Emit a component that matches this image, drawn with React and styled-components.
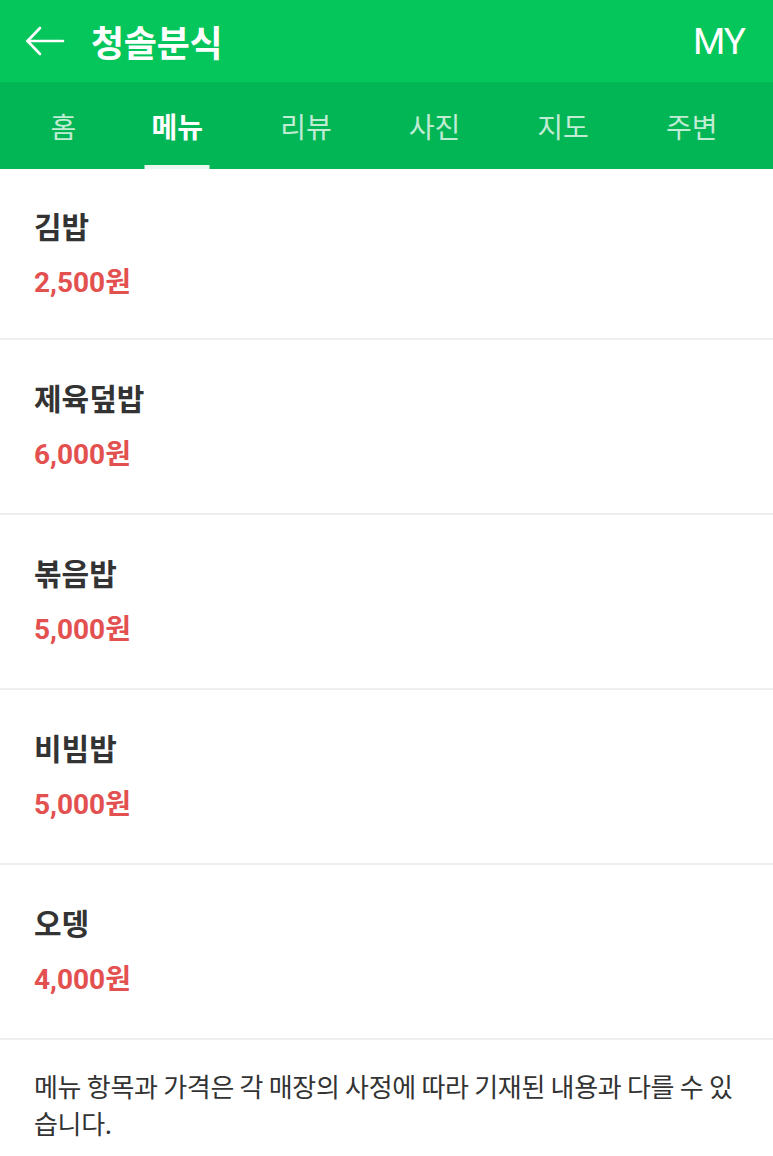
import React from 'react';
import styled, { createGlobalStyle } from 'styled-components';

const GlobalStyle = createGlobalStyle`
  body {
    margin: 0;
    background: #ffffff;
    font-family: "Noto Sans CJK KR", "Noto Sans", sans-serif;
  }
`;

const Page = styled.div`
  width: 773px;
  min-height: 1156px;
  background: #fff;
`;

const Header = styled.header`
  height: 82px;
  background: #05c65a;
  display: flex;
  align-items: center;
  padding: 0 28px 0 25px;
  box-sizing: border-box;
  color: #fff;
`;

const BackButton = styled.button`
  background: none;
  border: none;
  padding: 0;
  width: 42px;
  height: 44px;
  display: flex;
  align-items: center;
  color: #fff;
`;

const Title = styled.h1`
  margin: 0 0 0 24px;
  font-size: 36px;
  font-weight: 700;
  letter-spacing: -0.3px;
  flex: 1;
`;

const MyLink = styled.span`
  font-family: "Roboto", "Noto Sans", sans-serif;
  font-size: 37px;
  font-weight: 400;
  letter-spacing: -1px;
`;

const TabBar = styled.nav`
  height: 87px;
  background: #03b655;
  display: grid;
  grid-template-columns: 113px repeat(5, 1fr);
  padding-right: 17px;
`;

const Tab = styled.div`
  position: relative;
  display: flex;
  align-items: center;
  justify-content: center;
  font-size: 28px;
  font-weight: ${p => (p.$active ? 700 : 400)};
  color: ${p => (p.$active ? '#ffffff' : 'rgba(255,255,255,0.75)')};
  &:first-child {
    padding-left: 14px;
  }
  &::after {
    content: '';
    display: ${p => (p.$active ? 'block' : 'none')};
    position: absolute;
    bottom: 0;
    left: 50%;
    transform: translateX(-50%);
    width: 65px;
    height: 4px;
    background: #eaf7ef;
  }
`;

const MenuList = styled.ul`
  list-style: none;
  margin: 0;
  padding: 0;
`;

const MenuItem = styled.li`
  height: 175px;
  box-sizing: border-box;
  padding: 35px 34px 0;
  border-bottom: 2px solid #eeeeee;
  &:first-child {
    height: 171px;
    padding-top: 34px;
  }
`;

const ItemName = styled.div`
  font-size: 30px;
  font-weight: 700;
  color: #333333;
  line-height: 44px;
`;

const ItemPrice = styled.div`
  margin-top: 19px;
  font-size: 28px;
  font-weight: 700;
  color: #e35050;
  line-height: 34px;
  font-family: "Roboto", "Noto Sans CJK KR", sans-serif;
`;

const Notice = styled.p`
  margin: 0;
  padding: 27px 34px 0;
  font-size: 26px;
  line-height: 37px;
  color: #333333;
  letter-spacing: -0.3px;
`;

const tabs = ['홈', '메뉴', '리뷰', '사진', '지도', '주변'];

const menu = [
  { name: '김밥', price: '2,500원' },
  { name: '제육덮밥', price: '6,000원' },
  { name: '볶음밥', price: '5,000원' },
  { name: '비빔밥', price: '5,000원' },
  { name: '오뎅', price: '4,000원' },
];

const App = () => (
  <>
    <GlobalStyle />
    <Page>
      <Header>
        <BackButton aria-label="back">
          <svg width="40" height="30" viewBox="0 0 40 30" fill="none" stroke="currentColor" strokeWidth="2.6" strokeLinecap="round" strokeLinejoin="round">
            <path d="M38 15H2.5" />
            <path d="M15 2L2.5 15 15 28" />
          </svg>
        </BackButton>
        <Title>청솔분식</Title>
        <MyLink>MY</MyLink>
      </Header>
      <TabBar>
        {tabs.map(t => (
          <Tab key={t} $active={t === '메뉴'}>{t}</Tab>
        ))}
      </TabBar>
      <MenuList>
        {menu.map(item => (
          <MenuItem key={item.name}>
            <ItemName>{item.name}</ItemName>
            <ItemPrice>{item.price}</ItemPrice>
          </MenuItem>
        ))}
      </MenuList>
      <Notice>메뉴 항목과 가격은 각 매장의 사정에 따라 기재된 내용과 다를 수 있습니다.</Notice>
    </Page>
  </>
);

export default App;
